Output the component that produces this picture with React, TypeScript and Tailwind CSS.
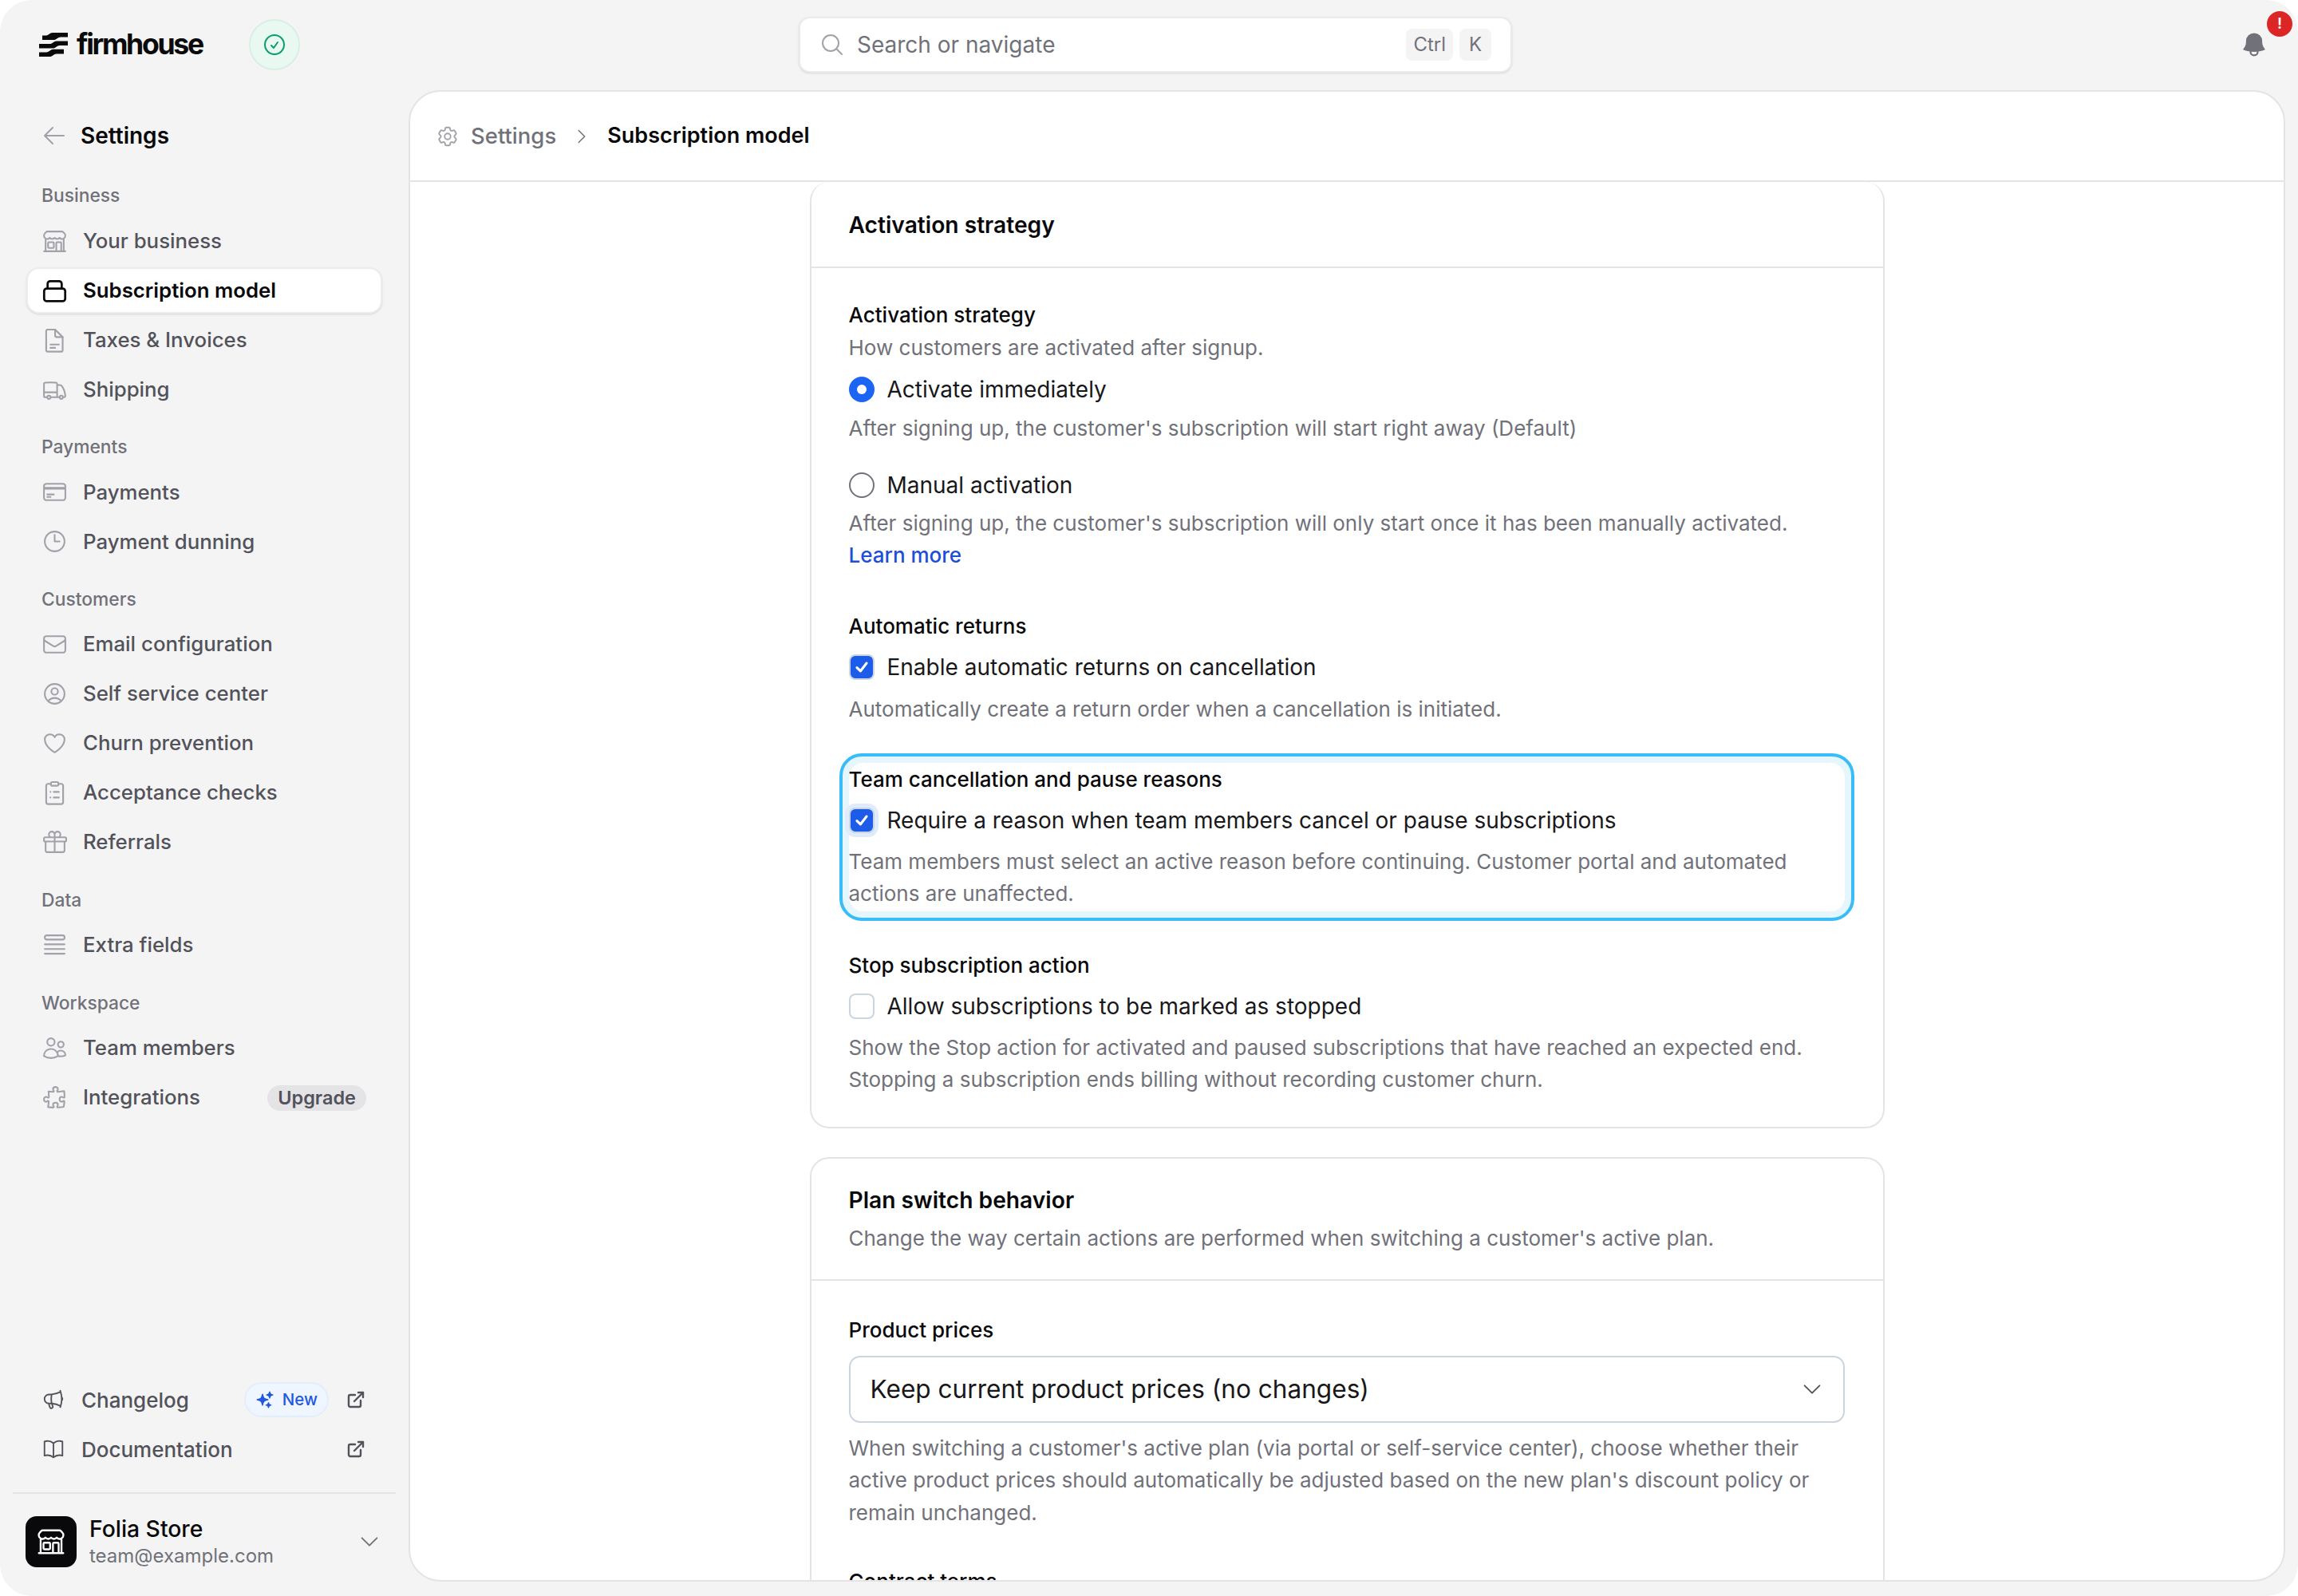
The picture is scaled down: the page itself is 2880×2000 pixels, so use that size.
import React from "react";
import {
  HiOutlineBuildingStorefront, HiOutlineTruck, HiOutlineCreditCard, HiOutlineClock, HiOutlineEnvelope,
  HiOutlineUserCircle, HiOutlineHeart, HiOutlineGift, HiOutlineUsers,
  HiOutlinePuzzlePiece, HiOutlineMegaphone, HiOutlineBookOpen, HiOutlineMagnifyingGlass, HiOutlineCog6Tooth,
  HiOutlineChevronRight, HiOutlineChevronDown, HiOutlineArrowLeft, HiSparkles, HiBell, HiOutlineCheckCircle,
} from "react-icons/hi2";
import { ExternalLink } from "lucide-react";

const Logo = () => (
  <svg viewBox="0 0 36 30" className="w-[36px] h-[30px] shrink-0" fill="#0a0a0a">
    <path d="M36 0H17c-4 0-5 3.600-9 3.600H4V9h14c4 0 5-3.600 9-3.600h9z" />
    <path d="M36 10.500H22c-4 0-5 3.600-9 3.600H0v5.400h17c4 0 5-3.600 9-3.600h10z" />
    <path d="M31 20.800H18c-4 0-5 3.600-9 3.600H0V30h13c4 0 5-3.600 9-3.600h9z" />
  </svg>
);

const SubIcon = () => (
  <svg viewBox="0 0 28 28" className="w-[33px] h-[33px] shrink-0" fill="none" stroke="#0a0a0a" strokeWidth="2.300" strokeLinejoin="round">
    <rect x="2.800" y="11.500" width="22.400" height="13.500" rx="2.800" />
    <path d="M6.500 11.500V6.500A2.800 2.800 0 0 1 9.300 3.700h9.400a2.800 2.800 0 0 1 2.800 2.800v5" />
  </svg>
);

const DocIcon = () => (
  <svg viewBox="0 0 28 28" className="w-[33px] h-[33px] shrink-0" fill="none" stroke="currentColor" strokeWidth="1.800" strokeLinejoin="round" strokeLinecap="round">
    <path d="M6.500 2.500h8l8 8v14a1.500 1.500 0 0 1-1.500 1.500H6.500A1.500 1.500 0 0 1 5 24.500v-20.500a1.500 1.500 0 0 1 1.500-1.500z" />
    <path d="M14.500 2.500v6.500a1.500 1.500 0 0 0 1.500 1.500h6.500M9.500 18.500h9M9.500 22h5" />
  </svg>
);

const FieldsIcon = () => (
  <svg viewBox="0 0 28 28" className="w-[33px] h-[33px] shrink-0" fill="none" stroke="currentColor" strokeWidth="1.800" strokeLinecap="round">
    <rect x="3.500" y="3.500" width="21" height="4.500" rx="2" />
    <path d="M3.500 13h21M3.500 18h21M3.500 23h21" />
  </svg>
);

const ClipIcon = () => (
  <svg viewBox="0 0 28 28" className="w-[33px] h-[33px] shrink-0" fill="none" stroke="currentColor" strokeWidth="1.800" strokeLinejoin="round" strokeLinecap="round">
    <path d="M10 4.500H7a2 2 0 0 0-2 2V24a2 2 0 0 0 2 2h14a2 2 0 0 0 2-2V6.500a2 2 0 0 0-2-2h-3" />
    <rect x="10" y="2.500" width="8" height="4" rx="1.500" />
    <path d="M9.500 13h.01M13 13h5.500M9.500 19h.01M13 19h5.500" />
  </svg>
);

type NavItem = { label: string; icon: React.ReactNode; active?: boolean; badge?: string };
const ic = "w-[33px] h-[33px] shrink-0";
const sections: { title: string; items: NavItem[] }[] = [
  { title: "Business", items: [
    { label: "Your business", icon: <HiOutlineBuildingStorefront className={ic} /> },
    { label: "Subscription model", icon: <SubIcon />, active: true },
    { label: "Taxes & Invoices", icon: <DocIcon /> },
    { label: "Shipping", icon: <HiOutlineTruck className={ic} /> },
  ]},
  { title: "Payments", items: [
    { label: "Payments", icon: <HiOutlineCreditCard className={ic} /> },
    { label: "Payment dunning", icon: <HiOutlineClock className={ic} /> },
  ]},
  { title: "Customers", items: [
    { label: "Email configuration", icon: <HiOutlineEnvelope className={ic} /> },
    { label: "Self service center", icon: <HiOutlineUserCircle className={ic} /> },
    { label: "Churn prevention", icon: <HiOutlineHeart className={ic} /> },
    { label: "Acceptance checks", icon: <ClipIcon /> },
    { label: "Referrals", icon: <HiOutlineGift className={ic} /> },
  ]},
  { title: "Data", items: [{ label: "Extra fields", icon: <FieldsIcon /> }] },
  { title: "Workspace", items: [
    { label: "Team members", icon: <HiOutlineUsers className={ic} /> },
    { label: "Integrations", icon: <HiOutlinePuzzlePiece className={ic} />, badge: "Upgrade" },
  ]},
];

const Sidebar = () => (
  <aside className="w-[512px] shrink-0 flex flex-col">
    <div className="flex items-center gap-[17px] h-[58px] mt-[28px] pl-[52px] text-[#a1a1aa]">
      <HiOutlineArrowLeft className="w-[32px] h-[32px]" />
      <span className="text-[28px] font-semibold text-[#09090b]">Settings</span>
    </div>
    <nav className="flex flex-col gap-[24.900px] mt-[28px]">
      {sections.map((s) => (
        <div key={s.title} className="flex flex-col">
          <div className="pl-[52px] h-[36px] leading-[36px] text-[22.800px] font-medium text-[#71717a] mb-[10px]">{s.title}</div>
          <div className="flex flex-col gap-[4px]">
            {s.items.map((it) => (
              <div
                key={it.label}
                className={
                  it.active
                    ? "ml-[33px] w-[446px] h-[58px] pl-[17px] pr-[18px] flex items-center gap-[19px] rounded-[16px] bg-white border-2 border-[#ececee] shadow-sm text-[#09090b] font-semibold text-[25.800px]"
                    : "ml-[33px] w-[446px] h-[58px] pl-[19px] pr-[20px] flex items-center gap-[19px] text-[#a1a1aa] text-[25.800px]"
                }
              >
                {it.icon}
                <span className={it.active ? "" : "text-[#52525b] font-medium"}>{it.label}</span>
                {it.badge && (
                  <span className="ml-auto h-[32px] px-[13px] rounded-full bg-[#e4e4e7] text-[#52525b] text-[23.500px] font-semibold flex items-center">{it.badge}</span>
                )}
              </div>
            ))}
          </div>
        </div>
      ))}
    </nav>
    <div className="mt-auto flex flex-col">
      <div className="flex items-center h-[58px] pl-[52px] pr-[54px] text-[#52525b] text-[26px] font-medium mb-[4px]">
        <HiOutlineMegaphone className="w-[30px] h-[30px] mr-[20px]" />
        <span>Changelog</span>
        <span className="ml-auto mr-[22px] h-[44px] px-[12px] rounded-full bg-[#eff6ff] border-2 border-[#e3eefd] flex items-center gap-[10px] text-[#2158e0] text-[20.500px] font-medium">
          <HiSparkles className="w-[24px] h-[24px]" />New
        </span>
        <ExternalLink className="w-[24px] h-[24px]" strokeWidth={2.400} />
      </div>
      <div className="flex items-center h-[58px] pl-[52px] pr-[54px] text-[#52525b] text-[26px] font-medium">
        <HiOutlineBookOpen className="w-[30px] h-[30px] mr-[20px]" />
        <span>Documentation</span>
        <ExternalLink className="w-[24px] h-[24px] ml-auto" strokeWidth={2.400} />
      </div>
      <div className="mx-[16px] mt-[25px] h-[2px] bg-[#e4e4e7]" />
      <div className="flex items-center pl-[32px] pr-[34px] pt-[26px] pb-[34px]">
        <div className="w-[64px] h-[64px] rounded-[14px] bg-[#09090b] flex items-center justify-center text-white">
          <HiOutlineBuildingStorefront className="w-[38px] h-[38px]" />
        </div>
        <div className="ml-[16px] flex flex-col">
          <span className="text-[28.300px] leading-[36px] font-medium text-[#09090b]">Folia Store</span>
          <span className="text-[24px] leading-[32px] text-[#71717a]">team@example.com</span>
        </div>
        <HiOutlineChevronDown className="ml-auto w-[30px] h-[30px] text-[#71717a]" />
      </div>
    </div>
  </aside>
);

const TopBar = () => (
  <header className="h-[113px] shrink-0 flex items-start relative">
    <div className="w-[1001px] shrink-0 flex items-center pl-[49px] pt-[24px]">
      <Logo />
      <span className="ml-[11px] w-[180px] text-[35.600px] leading-[60px] font-bold tracking-[-2.300px] text-[#0a0a0a]">firmhouse</span>
      <div className="ml-[36px] w-[64px] h-[64px] rounded-full bg-[#e9f9f2] border-2 border-[#d6f0e4] flex items-center justify-center text-[#0b9d6c]">
        <HiOutlineCheckCircle className="w-[32px] h-[32px]" />
      </div>
    </div>
    <div className="w-[894px] h-[70px] mt-[21px] rounded-[14px] bg-white border-2 border-[#ebebed] shadow-sm flex items-center pl-[24px] pr-[24px]">
      <HiOutlineMagnifyingGlass className="w-[32px] h-[32px] text-[#a1a1aa]" />
      <span className="ml-[15px] text-[28px] text-[#71717a]">Search or navigate</span>
      <span className="ml-auto h-[40px] px-[9px] rounded-[8px] bg-[#f4f4f5] text-[24px] text-[#71717a] flex items-center">Ctrl</span>
      <span className="ml-[8px] h-[40px] w-[40px] rounded-[8px] bg-[#f4f4f5] text-[24px] text-[#71717a] flex items-center justify-center">K</span>
    </div>
    <div className="ml-auto mr-[37px] mt-[38px] text-[#71717a]">
      <HiBell className="w-[36px] h-[36px]" />
    </div>
    <span className="absolute left-[2841px] top-[14px] w-[32px] h-[32px] rounded-full bg-[#dc2626] text-white text-[19px] font-semibold flex items-center justify-center">!</span>
  </header>
);

const Label = ({ children }: { children: React.ReactNode }) => (
  <div className="text-[26px] leading-[40px] font-medium text-[#09090b]">{children}</div>
);
const Desc = ({ children, className = "" }: { children: React.ReactNode; className?: string }) => (
  <p className={"text-[26px] leading-[40.400px] text-[#71717a] " + className}>{children}</p>
);
const Radio = ({ on, label }: { on?: boolean; label: string }) => (
  <div className="flex items-center h-[44px] gap-[16px] text-[28px] text-[#18181b]">
    {on ? (
      <span className="w-[32px] h-[32px] rounded-full bg-[#1c64f2] flex items-center justify-center">
        <span className="w-[12px] h-[12px] rounded-full bg-white" />
      </span>
    ) : (
      <span className="w-[32px] h-[32px] rounded-full border-2 border-[#71717a] bg-white" />
    )}
    {label}
  </div>
);
const Check = ({ on, focus, label }: { on?: boolean; focus?: boolean; label: string }) => (
  <div className="flex items-center h-[44px] gap-[16px] text-[28px] text-[#18181b]">
    {on ? (
      <span className={"w-[32px] h-[32px] rounded-[8px] bg-[#1c5ce8] border-2 border-[#cbd5e1] flex items-center justify-center " + (focus ? "shadow-[0_0_0_5px_#dfecfd]" : "")}>
        <svg viewBox="0 0 20 20" className="w-[22px] h-[22px]" fill="none" stroke="white" strokeWidth="2.800" strokeLinecap="round" strokeLinejoin="round"><path d="M4.500 10.500 8.500 14.500 15.500 5.500" /></svg>
      </span>
    ) : (
      <span className="w-[32px] h-[32px] rounded-[8px] bg-white border-2 border-[#cbd5e1]" />
    )}
    {label}
  </div>
);

const Main = () => (
  <main className="flex-1 mr-[16px] mb-[18px] flex flex-col bg-white border-2 border-[#e4e4e7] rounded-[40px] overflow-hidden">
    <div className="h-[113px] shrink-0 border-b-2 border-[#e4e4e7] flex items-center pl-[32px]">
      <HiOutlineCog6Tooth className="w-[30px] h-[30px] text-[#a1a1aa]" />
      <span className="ml-[14px] text-[27.500px] text-[#71717a] font-medium">Settings</span>
      <HiOutlineChevronRight className="ml-[20px] w-[24px] h-[24px] text-[#71717a]" />
      <span className="ml-[20px] text-[27px] font-semibold text-[#09090b]">Subscription model</span>
    </div>
    <div className="flex-1 min-h-0 overflow-hidden flex flex-col items-center gap-[36px]">
      <section className="w-[1347px] shrink-0 border-2 border-[#e4e4e7] border-t-0 rounded-[24px]">
        <div className="h-[108px] pt-[2px] flex items-center px-[47px] border-b-2 border-[#e4e4e7] text-[28.200px] font-semibold text-[#09090b]">Activation strategy</div>
        <div className="pl-[47px] pr-[48px] pt-[39px] pb-[38px]">
          <Label>Activation strategy</Label>
          <Desc className="mt-[1px]">How customers are activated after signup.</Desc>
          <div className="mt-[10px]"><Radio on label="Activate immediately" /></div>
          <Desc className="mt-[7px]">After signing up, the customer's subscription will start right away (Default)</Desc>
          <div className="mt-[28px]"><Radio label="Manual activation" /></div>
          <Desc className="mt-[6px]">After signing up, the customer's subscription will only start once it has been manually activated.<br /><span className="text-[#1d4ed8] font-medium">Learn more</span></Desc>
          <div className="mt-[48px]"><Label>Automatic returns</Label></div>
          <div className="mt-[9px]"><Check on label="Enable automatic returns on cancellation" /></div>
          <Desc className="mt-[11px]">Automatically create a return order when a cancellation is initiated.</Desc>
          <div className="mt-[35px] -mx-[12px] border-4 border-[#38bdf8] rounded-[28px] bg-[#e6f6fe] p-[8px]">
            <div className="bg-white rounded-[18px] pt-[1px] pb-[1px]">
              <Label>Team cancellation and pause reasons</Label>
              <div className="mt-[9px]"><Check on focus label="Require a reason when team members cancel or pause subscriptions" /></div>
              <Desc className="mt-[10px]">Team members must select an active reason before continuing. Customer portal and automated actions are unaffected.</Desc>
            </div>
          </div>
          <div className="mt-[36px]"><Label>Stop subscription action</Label></div>
          <div className="mt-[9px]"><Check label="Allow subscriptions to be marked as stopped" /></div>
          <Desc className="mt-[10px]">Show the Stop action for activated and paused subscriptions that have reached an expected end. Stopping a subscription ends billing without recording customer churn.</Desc>
        </div>
      </section>
      <section className="w-[1347px] shrink-0 border-2 border-[#e4e4e7] rounded-[24px]">
        <div className="px-[47px] pt-[32px] pb-[31px] border-b-2 border-[#e4e4e7]">
          <div className="text-[28.200px] leading-[40px] font-semibold text-[#09090b]">Plan switch behavior</div>
          <Desc className="mt-[8px]">Change the way certain actions are performed when switching a customer's active plan.</Desc>
        </div>
        <div className="pl-[47px] pr-[48px] pt-[42px]">
          <Label>Product prices</Label>
          <div className="mt-[12px] h-[84px] rounded-[14px] border-2 border-[#cbd5e1] flex items-center pl-[25px] pr-[24px] text-[31.600px] text-[#18181b]">
            Keep current product prices (no changes)
            <HiOutlineChevronDown className="ml-auto w-[30px] h-[30px] text-[#52525b]" />
          </div>
          <Desc className="mt-[12px]">When switching a customer's active plan (via portal or self-service center), choose whether their active product prices should automatically be adjusted based on the new plan's discount policy or remain unchanged.</Desc>
          <div className="mt-[46px]"><Label>Contract terms</Label></div>
        </div>
      </section>
    </div>
  </main>
);

export default function App() {
  return (
    <div className="w-[2880px] h-[2000px] bg-white font-[Inter,sans-serif]">
      <div className="w-full h-full rounded-[40px] bg-[#f4f4f4] overflow-hidden flex flex-col relative">
        <TopBar />
        <div className="flex-1 min-h-0 flex">
          <Sidebar />
          <Main />
        </div>
      </div>
    </div>
  );
}
